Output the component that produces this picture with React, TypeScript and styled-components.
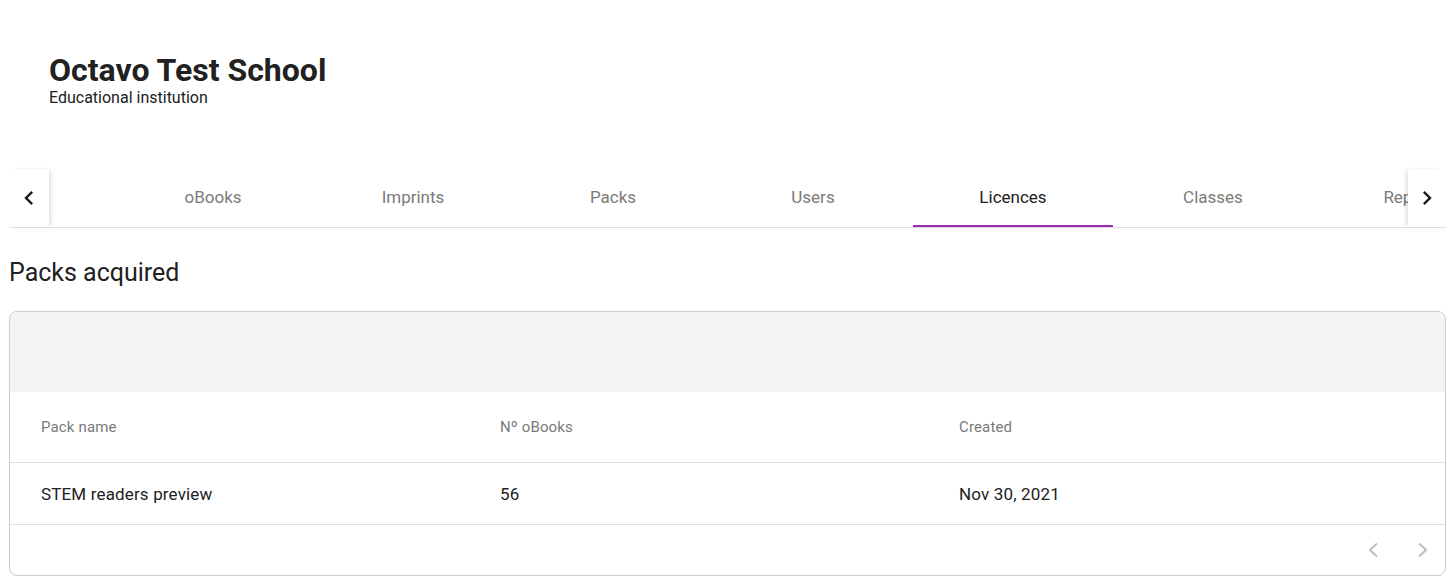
import React from 'react';
import styled, { createGlobalStyle } from 'styled-components';

const GlobalStyle = createGlobalStyle`
	html, body {
		margin: 0;
		padding: 0;
		background: #ffffff;
		font-family: Roboto, 'Noto Sans', Arial, sans-serif;
		color: #212121;
		overflow: hidden;
	}
`;

const tabs = ['oBooks', 'Imprints', 'Packs', 'Users', 'Licences', 'Classes', 'Reports'];
const activeTab = 'Licences';

const columns = ['Pack name', 'Nº oBooks', 'Created'];
const rows = [['STEM readers preview', '56', 'Nov 30, 2021']];

// material style chevrons for the tab scroller
const TabChevron = ({ dir }: { dir: 'left' | 'right' }) => (
	<svg width='28' height='28' viewBox='0 0 24 24' fill='#1a1a1a'>
		<path d={dir === 'left' ? 'M15.41 7.41L14 6l-6 6 6 6 1.41-1.41L10.83 12z' : 'M8.59 16.59L10 18l6-6-6-6-1.41 1.41L13.17 12z'} />
	</svg>
);

// thin chevrons used by the table pagination
const PageChevron = ({ dir }: { dir: 'left' | 'right' }) => (
	<svg width='12' height='16' viewBox='0 0 12 16' fill='none'>
		<path d={dir === 'left' ? 'M10 1.5 L3 8 L10 14.5' : 'M2 1.5 L9 8 L2 14.5'} stroke='#bdbdbd' strokeWidth='2' />
	</svg>
);

const App = (): React.FunctionComponentElement<JSX.Element> => {
	return (
		<Page>
			<GlobalStyle />
			<Header>
				<h1>Octavo Test School</h1>
				<span>Educational institution</span>
			</Header>

			<TabBar>
				<ScrollButton $side='left'>
					<TabChevron dir='left' />
				</ScrollButton>
				<TabViewport>
					<TabTrack>
						{tabs.map(tab => (
							<Tab key={tab} $active={tab === activeTab}>
								{tab}
							</Tab>
						))}
					</TabTrack>
				</TabViewport>
				<ScrollButton $side='right'>
					<TabChevron dir='right' />
				</ScrollButton>
			</TabBar>

			<SectionTitle>Packs acquired</SectionTitle>

			<Card>
				<Toolbar />
				<Table>
					<colgroup>
						<col style={{ width: 459 }} />
						<col style={{ width: 459 }} />
						<col />
					</colgroup>
					<thead>
						<tr>
							{columns.map(col => (
								<th key={col}>{col}</th>
							))}
						</tr>
					</thead>
					<tbody>
						{rows.map(row => (
							<tr key={row[0]}>
								{row.map((cell, i) => (
									<td key={i}>{cell}</td>
								))}
							</tr>
						))}
					</tbody>
				</Table>
				<Pagination>
					<PageButton>
						<PageChevron dir='left' />
					</PageButton>
					<PageButton>
						<PageChevron dir='right' />
					</PageButton>
				</Pagination>
			</Card>
		</Page>
	);
};

const Page = styled.div`
	padding-left: 9px;
	width: 1446px;
	box-sizing: border-box;
`;

const Header = styled.header`
	padding: 52px 40px 61px;
	display: flex;
	flex-direction: column;

	h1 {
		margin: 0;
		font-size: 32px;
		font-weight: 700;
		line-height: 36px;
		color: #212121;
	}

	span {
		font-size: 16px;
		line-height: 20px;
		color: #212121;
	}
`;

const TabBar = styled.nav`
	display: flex;
	height: 58px;
	border-bottom: 1px solid #e0e0e0;
`;

const ScrollButton = styled.button<{ $side: 'left' | 'right' }>`
	width: ${p => (p.$side === 'left' ? '40px' : '38px')};
	flex-shrink: 0;
	border: none;
	background: #fff;
	padding: 0;
	display: flex;
	align-items: center;
	justify-content: center;
	position: relative;
	z-index: 1;
	box-shadow: ${p => (p.$side === 'left' ? '3px 0 5px -2px rgba(0,0,0,0.18)' : '-3px 0 5px -2px rgba(0,0,0,0.18)')};
`;

const TabViewport = styled.div`
	flex: 1;
	overflow: hidden;
`;

const TabTrack = styled.div`
	display: flex;
	height: 100%;
	padding-left: 64px;
`;

const Tab = styled.div<{ $active: boolean }>`
	flex: 0 0 200px;
	display: flex;
	align-items: center;
	justify-content: center;
	font-size: 17px;
	color: ${p => (p.$active ? '#212121' : '#7a7a7a')};
	box-sizing: border-box;
	border-bottom: 2px solid ${p => (p.$active ? '#9c27b0' : 'transparent')};
`;

const SectionTitle = styled.h2`
	margin: 31px 0 24px;
	font-size: 25px;
	font-weight: 400;
	line-height: 28px;
	color: #212121;
`;

const Card = styled.section`
	width: 100%;
	border: 1px solid #cccccc;
	border-radius: 8px;
	overflow: hidden;
	box-sizing: border-box;
`;

const Toolbar = styled.div`
	height: 80px;
	background: #f4f4f4;
`;

const Table = styled.table`
	width: 100%;
	border-collapse: collapse;
	table-layout: fixed;

	th,
	td {
		text-align: left;
		padding: 0 0 0 31px;
		letter-spacing: 0.15px;
	}

	th {
		height: 70px;
		font-size: 15px;
		font-weight: 400;
		color: #7a7a7a;
		border-bottom: 1px solid #e0e0e0;
	}

	td {
		height: 61px;
		font-size: 17px;
		color: #212121;
		border-bottom: 1px solid #e0e0e0;
	}
`;

const Pagination = styled.div`
	height: 50px;
	display: flex;
	justify-content: flex-end;
	align-items: center;
	gap: 38px;
	padding-right: 16px;
`;

const PageButton = styled.span`
	display: flex;
	width: 12px;
	justify-content: center;
`;

export default App;
